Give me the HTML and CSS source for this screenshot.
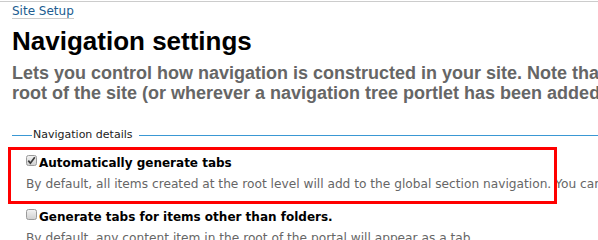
FILE: index.html
```html
<!DOCTYPE html>
<html lang="en">
<head>
<meta charset="utf-8">
<title>Navigation settings</title>
<link rel="stylesheet" href="styles.css">
</head>
<body>
<div class="topline"></div>
<div class="page">
  <p class="crumbs"><a href="#" class="crumb">Site Setup</a></p>
  <h1 class="title">Navigation settings</h1>
  <p class="desc">Lets you control how navigation is constructed in your site. Note that to control how the navigation tree is displayed, you should go to 'Manage portlets' at the<br>root of the site (or wherever a navigation tree portlet has been added) and change its settings directly.</p>
  <form class="form">
    <fieldset class="group">
      <legend class="group-legend">Navigation details</legend>
      <div class="field field-highlight">
        <label class="check-label">
          <span class="box"><svg width="11" height="11" viewBox="0 0 11 11"><defs><linearGradient id="g1" x1="0" y1="0" x2="0" y2="1"><stop offset="0" stop-color="#f4f4f4"/><stop offset="1" stop-color="#cfcfcf"/></linearGradient></defs><rect x="0.5" y="0.5" width="10" height="10" rx="2" fill="url(#g1)" stroke="#9a9a9a"/><path d="M2.3 5.6 L4.4 8.2 L8.8 2.2" fill="none" stroke="#3a3a3a" stroke-width="1.7"/></svg></span>
          <span class="check-text">Automatically generate tabs</span>
        </label>
        <div class="help">By default, all items created at the root level will add to the global section navigation. You can turn this off if you prefer manually constructing this part of the navigation.</div>
      </div>
      <div class="field">
        <label class="check-label">
          <span class="box"><svg width="11" height="11" viewBox="0 0 11 11"><defs><linearGradient id="g2" x1="0" y1="0" x2="0" y2="1"><stop offset="0" stop-color="#f4f4f4"/><stop offset="1" stop-color="#cfcfcf"/></linearGradient></defs><rect x="0.5" y="0.5" width="10" height="10" rx="2" fill="url(#g2)" stroke="#9a9a9a"/></svg></span>
          <span class="check-text">Generate tabs for items other than folders.</span>
        </label>
        <div class="help">By default, any content item in the root of the portal will appear as a tab.</div>
      </div>
    </fieldset>
  </form>
</div>
</body>
</html>
```

FILE: styles.css
```css
html, body {
  margin: 0;
  padding: 0;
  overflow: hidden;
  background: #fff;
}
body {
  font-family: "DejaVu Sans", Verdana, sans-serif;
  font-size: 12px;
  color: #000;
}
.topline {
  margin-top: 1px;
  border-top: 1px solid #cccccc;
}
.page {
  padding-left: 12px;
  width: 1600px;
}
.crumbs {
  margin: 0;
  padding-top: 1px;
  line-height: 16px;
}
.crumb {
  color: #205c90;
  text-decoration: none;
  border-bottom: 1px solid #cccccc;
}
.title {
  font-family: "Liberation Sans", Arial, sans-serif;
  font-weight: bold;
  font-size: 26px;
  line-height: 30px;
  margin: 7px 0 0;
  color: #000;
}
.desc {
  font-family: "Liberation Sans", Arial, sans-serif;
  font-weight: bold;
  font-size: 18px;
  line-height: 20px;
  color: #666666;
  margin: 7px 0 0;
  white-space: nowrap;
}
.form {
  margin: 0;
}
.group {
  margin: 25px 0 0;
  padding: 0;
  border: 0;
  border-top: 1px solid #3a98d4;
  min-width: 0;
}
.group-legend {
  margin-left: 20px;
  padding: 0 7px 0 1px;
  font-size: 11px;
  line-height: 14px;
  color: #222222;
}
.field {
  margin: 8px 0 0 -1px;
  width: 543px;
  box-sizing: border-box;
  padding: 5px 0 9px 15px;
}
.field + .field {
  margin-top: 3px;
}
.field-highlight {
  outline: 3px solid #ff0000;
}
.check-label {
  display: flex;
  align-items: flex-start;
  font-weight: bold;
  line-height: 16px;
  white-space: nowrap;
}
.box {
  display: block;
  width: 11px;
  height: 11px;
}
.box svg {
  display: block;
}
.check-text {
  margin-left: 2px;
}
.help {
  margin-top: 5px;
  font-size: 12.2px;
  line-height: 16px;
  color: #666666;
  white-space: nowrap;
}
```
